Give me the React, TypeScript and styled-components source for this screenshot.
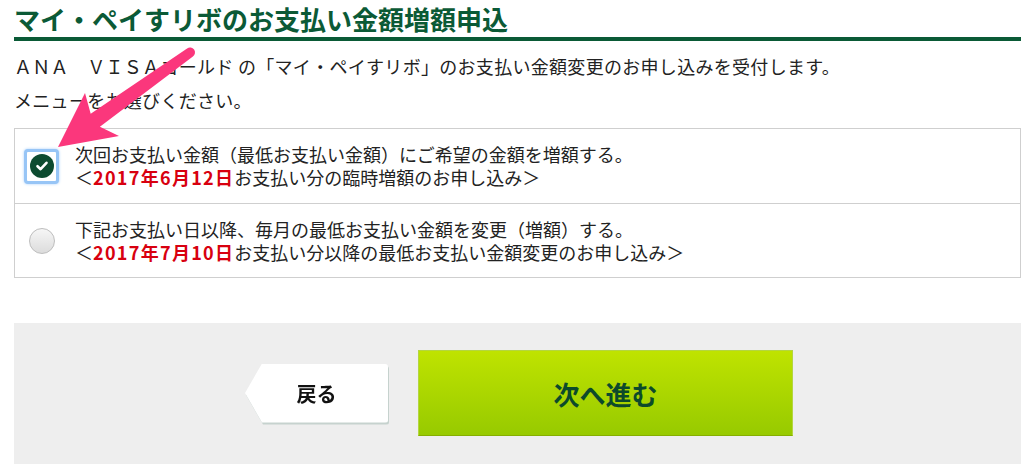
import React from "react";
import styled, { createGlobalStyle } from "styled-components";

const GlobalStyle = createGlobalStyle`
  html, body {
    margin: 0;
    padding: 0;
    background: #fff;
  }
  body {
    font-family: "Noto Sans CJK JP", "Noto Sans", sans-serif;
    color: #222;
  }
`;

const Page = styled.div`
  position: relative;
  width: 1024px;
  height: 464px;
  overflow: hidden;
  box-sizing: border-box;
  padding: 0 3px 0 14px;
`;

const Title = styled.h1`
  margin: 0;
  font-size: 26px;
  line-height: 37px;
  font-weight: 700;
  color: #0b5a36;
  border-bottom: 4px solid #0a5a36;
  white-space: nowrap;
`;

const Lead = styled.div`
  margin-top: 8px;
`;

const LeadLine = styled.p`
  margin: 0;
  font-size: 18px;
  line-height: 34px;
  letter-spacing: 0.3px;
  white-space: nowrap;
`;

const Options = styled.div`
  margin-top: 11px;
  border: 1px solid #cfcfcf;
`;

const Option = styled.label`
  display: flex;
  align-items: center;
  height: 74px;
  box-sizing: border-box;
  & + & {
    border-top: 1px solid #cfcfcf;
  }
`;

const MarkCell = styled.div`
  width: 53px;
  display: flex;
  justify-content: center;
  flex-shrink: 0;
`;

const FocusRing = styled.span`
  width: 35px;
  height: 35px;
  box-sizing: border-box;
  border: 3px solid #97c5f6;
  border-radius: 4px;
  box-shadow: 0 0 3px #a9d0fb;
  background: #fff;
  display: flex;
  align-items: center;
  justify-content: center;
`;

const Radio = styled.span<{ checked?: boolean }>`
  width: ${p => (p.checked ? 24 : 26)}px;
  height: ${p => (p.checked ? 24 : 26)}px;
  box-sizing: border-box;
  border-radius: 50%;
  display: flex;
  align-items: center;
  justify-content: center;
  background: ${p => (p.checked ? "#0d4b30" : "linear-gradient(#f6f6f6, #dcdcdc)")};
  border: ${p => (p.checked ? "none" : "1px solid #bdbdbd")};
`;

const OptionText = styled.div`
  margin-left: 7px;
  font-size: 18px;
  white-space: nowrap;
`;

const TextLine = styled.span`
  display: block;
  height: 23px;
  line-height: 23px;
`;

const DateMark = styled.strong`
  color: #d8000f;
  font-weight: 700;
  letter-spacing: 1.3px;
`;

const ActionPanel = styled.div`
  margin-top: 45px;
  height: 160px;
  padding-top: 27px;
  box-sizing: border-box;
  background: #eeeeee;
`;

const ButtonRow = styled.div`
  display: flex;
  justify-content: center;
  align-items: center;
  gap: 30px;
  padding-left: 3px;
`;

const BackShadow = styled.div`
  filter: drop-shadow(1px 2px 0 #c6d2ce);
`;

const BackButton = styled.button`
  width: 143px;
  height: 59px;
  border: 0;
  padding: 0;
  border-radius: 0 3px 3px 0;
  background: #fff;
  clip-path: polygon(17px 0, 100% 0, 100% 100%, 17px 100%, 0 50%);
  font-family: "Noto Sans CJK JP", sans-serif;
  font-size: 20px;
  font-weight: 700;
  color: #111;
  cursor: pointer;
`;

const NextButton = styled.button`
  width: 375px;
  height: 86px;
  box-sizing: border-box;
  border: 1px solid #b4d640;
  border-bottom-color: #86ae00;
  background: linear-gradient(#bfe300, #97ca00);
  font-family: "Noto Sans CJK JP", sans-serif;
  font-size: 26px;
  font-weight: 700;
  color: #0c4a2b;
  cursor: pointer;
`;

const Annotation = styled.svg`
  position: absolute;
  left: 0;
  top: 0;
  pointer-events: none;
`;

const CheckIcon = () => (
  <svg width="14" height="14" viewBox="0 0 14 14">
    <path d="M2.5 7.2 L5.6 10.2 L11.5 3.8" fill="none" stroke="#fff" strokeWidth="2.6" strokeLinecap="round" strokeLinejoin="round" />
  </svg>
);

export default function App() {
  return (
    <Page>
      <GlobalStyle />
      <Title>マイ・ペイすリボのお支払い金額増額申込</Title>
      <Lead>
        <LeadLine>ＡＮＡ　ＶＩＳＡゴールド の「マイ・ペイすリボ」のお支払い金額変更のお申し込みを受付します。</LeadLine>
        <LeadLine>メニューをお選びください。</LeadLine>
      </Lead>

      <Options>
        <Option>
          <MarkCell>
            <FocusRing>
              <Radio checked>
                <CheckIcon />
              </Radio>
            </FocusRing>
          </MarkCell>
          <OptionText>
            <TextLine>次回お支払い金額（最低お支払い金額）にご希望の金額を増額する。</TextLine>
            <TextLine>＜<DateMark>2017年6月12日</DateMark>お支払い分の臨時増額のお申し込み＞</TextLine>
          </OptionText>
        </Option>
        <Option>
          <MarkCell>
            <Radio />
          </MarkCell>
          <OptionText>
            <TextLine>下記お支払い日以降、毎月の最低お支払い金額を変更（増額）する。</TextLine>
            <TextLine>＜<DateMark>2017年7月10日</DateMark>お支払い分以降の最低お支払い金額変更のお申し込み＞</TextLine>
          </OptionText>
        </Option>
      </Options>

      <ActionPanel>
        <ButtonRow>
          <BackShadow>
            <BackButton>戻る</BackButton>
          </BackShadow>
          <NextButton>次へ進む</NextButton>
        </ButtonRow>
      </ActionPanel>

      {/* pink annotation arrow drawn over the page */}
      <Annotation width="1024" height="464" viewBox="0 0 1024 464">
        <path
          d="M58 147 L85 93 L90.7 113.8 L187.1 48.4 A5 5 0 0 1 192.9 56.6 L99.9 126.8 L119 136 Z"
          fill="#fb377c"
        />
      </Annotation>
    </Page>
  );
}
